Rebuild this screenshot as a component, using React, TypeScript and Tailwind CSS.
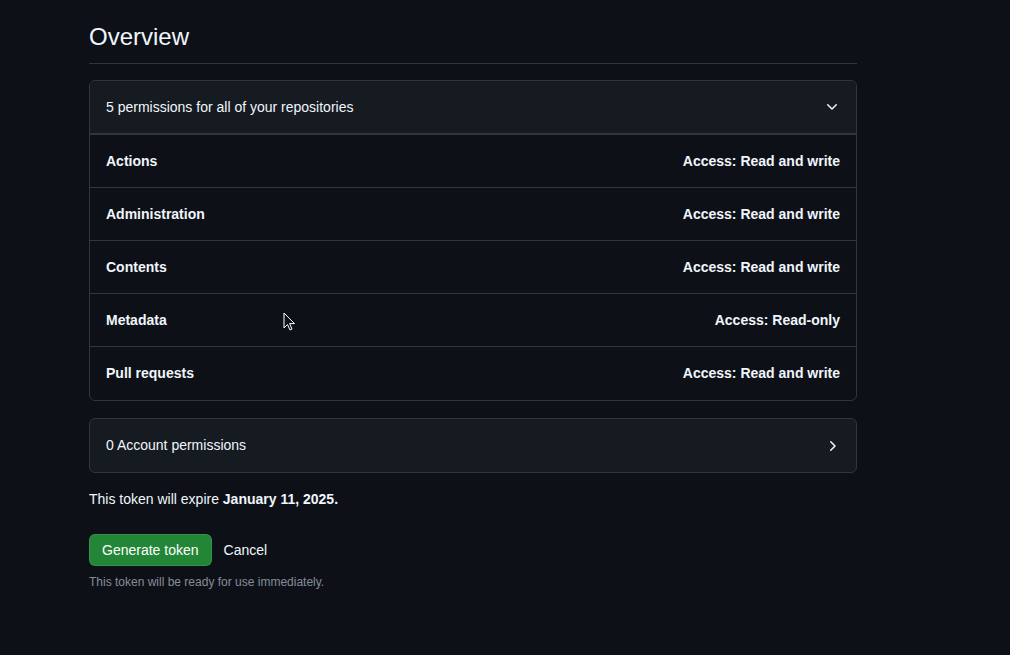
import React from "react";

const rows: [string, string][] = [
  ["Actions", "Access: Read and write"],
  ["Administration", "Access: Read and write"],
  ["Contents", "Access: Read and write"],
  ["Metadata", "Access: Read-only"],
  ["Pull requests", "Access: Read and write"],
];

export default function App() {
  return (
    <div
      className="relative min-h-[655px] w-full bg-[#0d1117] text-[#f0f6fc]"
      style={{ fontFamily: '"Liberation Sans", Arial, sans-serif' }}
    >
      <div className="ml-[89px] w-[768px] pt-[19px]">
        <h2 className="border-b border-[#30363d] pb-[8px] text-[24px] leading-[36px] font-normal">
          Overview
        </h2>

        <div className="mt-[16px] rounded-[6px] border border-[#30363d]">
          <div className="flex items-center justify-between rounded-t-[6px] border-b-2 border-[#30363d] bg-[#161b22] px-[16px] py-[16px] text-[14px] leading-[20px]">
            <span>5 permissions for all of your repositories</span>
            <svg width="16" height="16" viewBox="0 0 16 16" fill="currentColor">
              <path d="M12.78 5.22a.749.749 0 0 1 0 1.06l-4.25 4.25a.749.749 0 0 1-1.06 0L3.22 6.28a.749.749 0 1 1 1.06-1.06L8 8.939l3.72-3.719a.749.749 0 0 1 1.06 0Z" />
            </svg>
          </div>
          {rows.map(([name, access], i) => (
            <div
              key={name}
              className={`flex items-center justify-between px-[16px] py-[16px] text-[14px] leading-[20px] font-bold ${
                i < rows.length - 1 ? "border-b border-[#30363d]" : "pb-[17px]"
              }`}
            >
              <span>{name}</span>
              <span>{access}</span>
            </div>
          ))}
        </div>

        <div className="mt-[17px] flex items-center justify-between rounded-[6px] border border-[#30363d] bg-[#161b22] px-[16px] py-[16px] text-[14px] leading-[21px]">
          <span>0 Account permissions</span>
          <svg width="16" height="16" viewBox="0 0 16 16" fill="currentColor">
            <path d="M6.22 3.22a.75.75 0 0 1 1.06 0l4.25 4.25a.75.75 0 0 1 0 1.06l-4.25 4.25a.751.751 0 0 1-1.042-.018.751.751 0 0 1-.018-1.042L9.94 8 6.22 4.28a.75.75 0 0 1 0-1.06Z" />
          </svg>
        </div>

        <p className="mt-[16px] text-[14px] leading-[20px]">
          This token will expire <strong className="font-bold">January 11, 2025.</strong>
        </p>

        <div className="mt-[25px] flex items-center gap-[12px]">
          <button className="h-[32px] rounded-[6px] border border-[rgba(240,246,252,0.1)] bg-[#238636] px-[12px] text-[14px] leading-[20px] text-white">
            Generate token
          </button>
          <button className="text-[14px] leading-[20px] text-[#f0f6fc]">Cancel</button>
        </div>

        <p className="mt-[8px] text-[12px] leading-[16px] text-[#848d97]">
          This token will be ready for use immediately.
        </p>
      </div>

      <svg
        className="absolute left-[283px] top-[312px]"
        width="13"
        height="20"
        viewBox="0 0 13 20"
      >
        <path
          d="M1 1 L1 16 L4.5 12.5 L7 18 L9 17 L6.6 11.6 L11.5 11.6 Z"
          fill="#0d1117"
          stroke="#ffffff"
          strokeWidth="1"
          strokeLinejoin="round"
        />
      </svg>
    </div>
  );
}
